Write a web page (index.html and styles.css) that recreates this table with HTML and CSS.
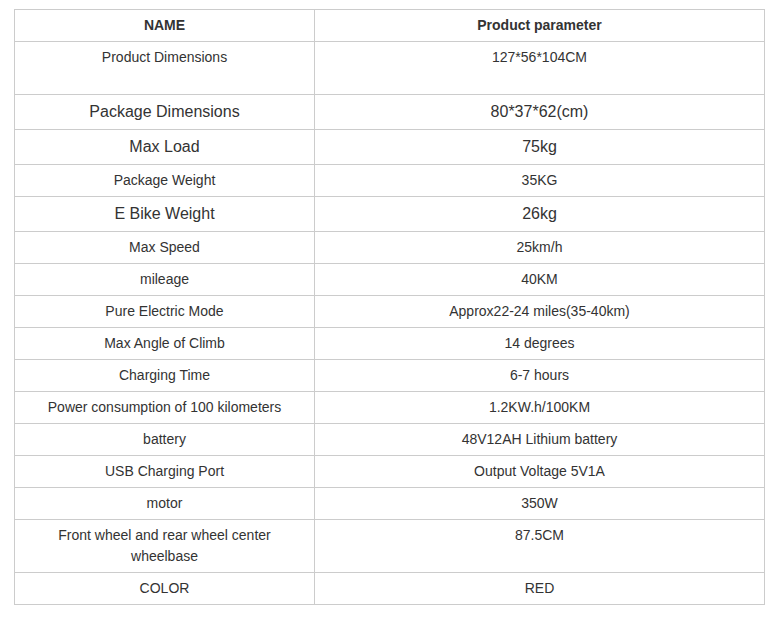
FILE: index.html
```html
<!DOCTYPE html>
<html>
<head>
<meta charset="utf-8">
<link rel="stylesheet" href="styles.css">
</head>
<body>
<div class="wrap">
<table class="spec">
  <colgroup><col class="c1"><col class="c2"></colgroup>
  <tr><th>NAME</th><th>Product parameter</th></tr>
  <tr><td>Product Dimensions<br>&nbsp;</td><td>127*56*104CM<br>&nbsp;</td></tr>
  <tr class="big"><td>Package Dimensions</td><td>80*37*62(cm)</td></tr>
  <tr class="big"><td>Max Load</td><td>75kg</td></tr>
  <tr><td>Package Weight</td><td>35KG</td></tr>
  <tr class="big"><td>E Bike Weight</td><td>26kg</td></tr>
  <tr><td>Max Speed</td><td>25km/h</td></tr>
  <tr><td>mileage</td><td>40KM</td></tr>
  <tr><td>Pure Electric Mode</td><td>Approx22-24 miles(35-40km)</td></tr>
  <tr><td>Max Angle of Climb</td><td>14 degrees</td></tr>
  <tr><td>Charging Time</td><td>6-7 hours</td></tr>
  <tr><td>Power consumption of 100 kilometers</td><td>1.2KW.h/100KM</td></tr>
  <tr><td>battery</td><td>48V12AH Lithium battery</td></tr>
  <tr><td>USB Charging Port</td><td>Output Voltage 5V1A</td></tr>
  <tr><td>motor</td><td>350W</td></tr>
  <tr><td class="wrapcell">Front wheel and rear wheel center wheelbase</td><td>87.5CM<br>&nbsp;</td></tr>
  <tr><td>COLOR</td><td>RED</td></tr>
</table>
</div>
</body>
</html>
```

FILE: styles.css
```css
html, body {
  margin: 0;
  padding: 0;
  background: #fff;
}
.wrap {
  padding: 9px 0 0 14px;
}
.spec {
  width: 750px;
  border-collapse: collapse;
  table-layout: fixed;
  font-family: "Liberation Sans", Arial, sans-serif;
  font-size: 14px;
  line-height: 21px;
  color: #333;
}
.c1 { width: 300px; }
.c2 { width: 450px; }
.spec th, .spec td {
  border: 1px solid #ccc;
  padding: 5px 10px;
  text-align: center;
  vertical-align: top;
}
.spec th {
  font-weight: bold;
}
.spec tr.big td {
  font-size: 16px;
  line-height: 24px;
}
.wrapcell {
  padding-left: 40px;
  padding-right: 40px;
}
```
